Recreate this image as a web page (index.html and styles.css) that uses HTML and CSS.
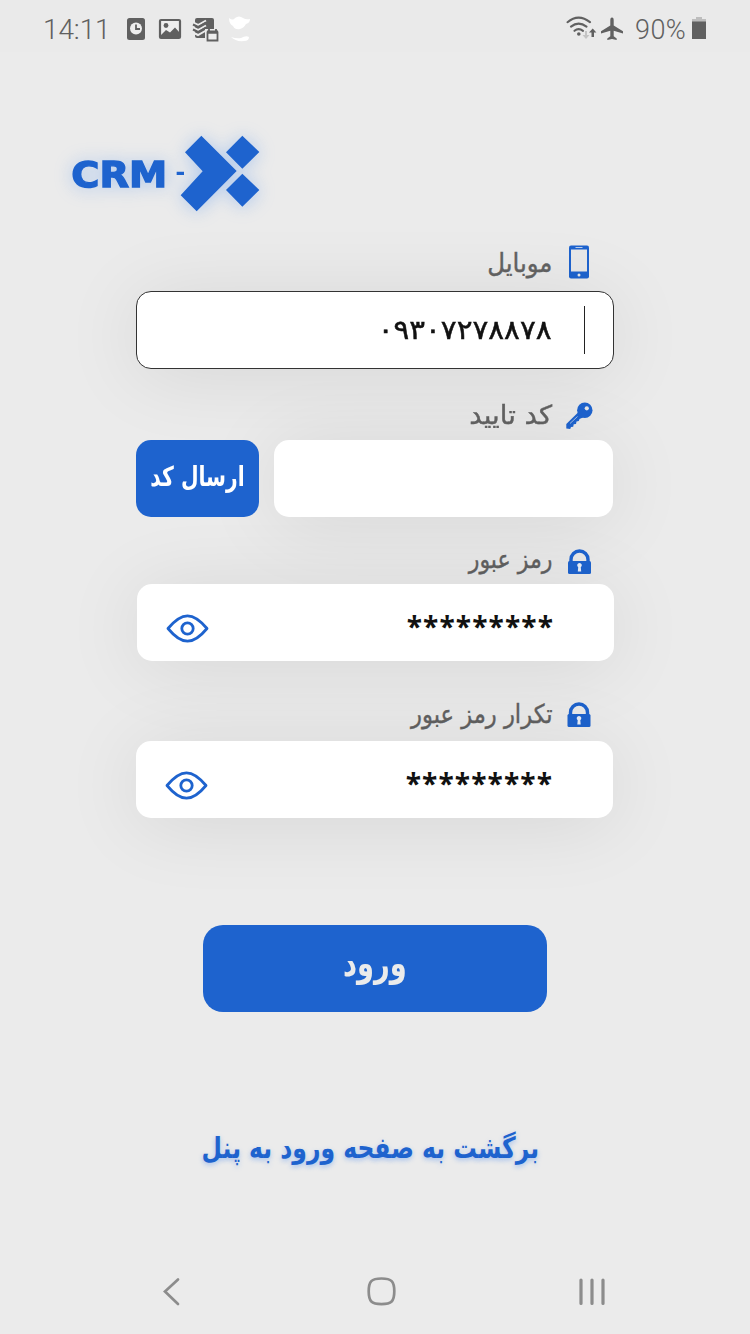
FILE: index.html
```html
<!DOCTYPE html>
<html lang="fa">
<head>
<meta charset="utf-8">
<title>CRM-X</title>
<link rel="stylesheet" href="styles.css">
</head>
<body>
<div class="screen">
  <header class="status">
    <span class="time">14:11</span>
    <svg class="status-left" viewBox="0 0 130 32" width="130" height="32">
      <rect x="1" y="4" width="18" height="22" rx="2.500" fill="#606060"/>
      <circle cx="10" cy="14.500" r="6" fill="#eee"/>
      <path d="M10 10.500v4.500h4" fill="none" stroke="#606060" stroke-width="1.800"/>
      <rect x="34" y="6" width="20" height="18" rx="1" fill="#eee" stroke="#606060" stroke-width="2.200"/>
      <circle cx="40" cy="11.500" r="2.400" fill="#606060"/>
      <path d="M35 21l5-5 4 2.500 5-5 5 5.500v5H35z" fill="#606060"/>
      <rect x="69" y="4" width="19" height="20" rx="2" fill="#606060"/>
      <path d="M67 8.500l5 2.500 8-4.500M67 13.500l5 2.500 8-4.500M67 18.500l5 2.500 8-4.500" fill="none" stroke="#ebebeb" stroke-width="2"/>
      <path d="M67 10.500l5 2.500 8-4.500M67 15.500l5 2.500 8-4.500" fill="none" stroke="#606060" stroke-width="2"/>
      <rect x="79" y="15" width="15" height="13" fill="#ebebeb"/>
      <path d="M81.500 18.500h10v8h-10zM83 18v-3M90 18v-3" fill="#eee" stroke="#606060" stroke-width="1.800"/>
      <path d="M81 18h11" stroke="#606060" stroke-width="3"/>
      <path d="M103 4q4 3 6 0 4-3 8 0 3 2 7 1 0 4-4 5-2 4-6 5-5 1-7-3-4-2-4-8zM105 23q6 2 10 1 5-3 8-1 0 4-5 4-8 1-13-4z" fill="#fff"/>
    </svg>
    <svg class="status-right" viewBox="0 0 60 32" width="60" height="32">
      <g fill="none" stroke="#606060" stroke-width="2.100" stroke-linecap="round">
        <path d="M2.500 8.200q11-9 22.500 0M6 12.600q7.500-6 15.500 0M9.500 16.800q4-3.500 8.500 0"/>
      </g>
      <circle cx="13.800" cy="20" r="1.800" fill="#606060"/>
      <path d="M20 17v4h-2.500l3.500 4 3.500-4H22v-4z" fill="#c4c4c4"/>
      <path d="M26.500 23v-4.500h-2.500l3.700-4 3.700 4H29v4.500z" fill="#606060"/>
      <path d="M47 3.500c1.300 0 1.700 1.400 1.700 2.700v5.200L58 17.200v2.300l-9.300-2.700v5.500l3 2.300v1.500L47 25l-4.700 1.100v-1.500l3-2.300v-5.500L36 19.500v-2.300l9.300-5.800V6.200c0-1.300.4-2.700 1.700-2.700z" fill="#606060"/>
    </svg>
    <span class="percent">90%</span>
    <svg class="battery" viewBox="0 0 16 24" width="16" height="24">
      <path d="M5 0h6v2h4v4H1V2h4z" fill="#bdbdbd"/><rect x="1" y="4.500" width="14" height="17.500" fill="#606060"/>
    </svg>
  </header>

  <svg class="logo" viewBox="0 0 690 330" width="230" height="110">
    <g fill="#1e63ce">
      <text class="logo-text" x="64" y="200" textLength="288" lengthAdjust="spacingAndGlyphs">CRM</text>
      <path d="M380 155h22v10h-22zM454 47l106 106-120 121-48-48 66-72-53-57zM577 47l51 49-51 50-49-49zM577 161l51 49-51 50-49-50z"/>
    </g>
  </svg>

  <main class="form" dir="rtl">
    <div class="label l1">
      <svg class="icon" viewBox="0 0 28 34" width="28" height="34">
        <rect x="4" y=".5" width="20" height="33" rx="2" fill="#1e63ce"/><path d="M6 4.500h16v22H6z" fill="#e8e8e8"/><path d="M10.500 2.500h7" stroke="#b9cdec"/><circle cx="14" cy="30" r="1.500" fill="#e8e8e8"/>
      </svg>
      <span class="t t1">موبایل</span>
    </div>
    <div class="field focus"><i class="caret"></i><span class="phone" dir="ltr">۰۹۳۰۷۲۷۸۸۷۸</span></div>

    <div class="label l2">
      <svg class="icon" viewBox="0 0 28 34" width="28" height="34">
        <path d="M13 14.500L1.300 26v4.500l3.900.5.800-2 2.200-.3.500-2.400 2.300-.4.500-2.400 2.300-.4.700-2.100 4.500-2z" fill="#1e63ce"/>
        <circle cx="19.800" cy="12.300" r="7.700" fill="#1e63ce"/><circle cx="21.800" cy="10.300" r="2.100" fill="#e6e6e6"/><path d="M5 25.500l7.500-7" stroke="#c3d2ea" stroke-width=".8"/>
      </svg>
      <span class="t t2">کد تایید</span>
    </div>
    <div class="row">
      <div class="field code"></div>
      <button class="send"><span class="t ts">ارسال کد</span></button>
    </div>

    <div class="label l3">
      <svg class="icon" viewBox="0 0 28 34" width="28" height="34">
        <path d="M6 18v-3.500a8 8 0 0 1 17 0V18" fill="none" stroke="#1e63ce" stroke-width="3.400"/><rect x="3" y="16" width="23" height="13" rx="1.500" fill="#1e63ce"/><path d="M14.500 18a2.300 2.300 0 0 1 1.300 4.200l.4 4.300h-3.400l.4-4.300A2.300 2.300 0 0 1 14.500 18z" fill="#e8eef8"/>
      </svg>
      <span class="t t3">رمز عبور</span>
    </div>
    <div class="field pw p1">
      <span class="stars">*********</span>
      <svg viewBox="0 0 44 32" width="44" height="32"><g fill="none" stroke="#1e63ce" stroke-width="2.800"><path d="M3 15.500C10 7 16 2.800 22.500 2.800S35 7 42 15.500C35 24 29 28.200 22.500 28.200S10 24 3 15.500z" stroke-linejoin="round"/><circle cx="22.500" cy="15.500" r="5.700"/></g></svg>
    </div>

    <div class="label l4">
      <svg class="icon" viewBox="0 0 28 34" width="28" height="34">
        <path d="M5.500 18v-3.500a8 8 0 0 1 17 0V18" fill="none" stroke="#1e63ce" stroke-width="3.400"/><rect x="2.500" y="16" width="23" height="13" rx="1.500" fill="#1e63ce"/><path d="M14 18a2.300 2.300 0 0 1 1.300 4.200l.4 4.300h-3.400l.4-4.300A2.300 2.300 0 0 1 14 18z" fill="#e8eef8"/>
      </svg>
      <span class="t t4">تکرار رمز عبور</span>
    </div>
    <div class="field pw">
      <span class="stars">*********</span>
      <svg viewBox="0 0 44 32" width="44" height="32"><g fill="none" stroke="#1e63ce" stroke-width="2.800"><path d="M3 15.500C10 7 16 2.800 22.500 2.800S35 7 42 15.500C35 24 29 28.200 22.500 28.200S10 24 3 15.500z" stroke-linejoin="round"/><circle cx="22.500" cy="15.500" r="5.700"/></g></svg>
    </div>
  </main>

  <button class="login"><span class="t tl">ورود</span></button>
  <a class="back" dir="rtl"><span class="t tb">برگشت به صفحه ورود به پنل</span></a>

  <nav class="nav">
    <svg viewBox="0 0 32 32" width="32" height="32"><path d="M22 4.500L9 16.500l13 12.500" fill="none" stroke="#8c8c8c" stroke-width="2.700" stroke-linecap="round"/></svg>
    <svg viewBox="0 0 32 32" width="32" height="32"><path d="M15.500 3.500c10 0 12.800 2.800 12.800 12.800s-2.800 12.800-12.800 12.800S2.700 26.300 2.700 16.300s2.800-12.800 12.800-12.800z" fill="none" stroke="#8c8c8c" stroke-width="2.700"/></svg>
    <svg viewBox="0 0 32 32" width="32" height="32"><path d="M5 5v23.500M16 5v23.500M27 5v23.500" stroke="#8c8c8c" stroke-width="3.200" stroke-linecap="round"/></svg>
  </nav>
</div>
</body>
</html>
```
FILE: styles.css
```css
* { box-sizing: border-box; }
body { margin: 0; background: #ebebeb; font-family: "DejaVu Sans", sans-serif; }
button { border: 0; padding: 0; font-family: inherit; }
svg { display: block; flex: none; }
.screen { width: 750px; height: 1334px; overflow: hidden; display: flex; flex-direction: column; background: #ebebeb; }

.status { height: 52px; flex: none; display: flex; align-items: flex-start; padding: 14px 39px 0 43px; color: #606060; font: 300 28px/32px Roboto, sans-serif; background: #eaeaea; }
.time { width: 83px; letter-spacing: -.1px; }
.status-left { margin-right: 309px; }
.status-right { margin-right: 10px; }
.percent { width: 56px; font-size: 27px; letter-spacing: .4px; white-space: nowrap; }
.battery { margin-top: 3px; }

.logo { margin: 68px 0 0 50px; overflow: visible; filter: drop-shadow(0 1px 9px rgba(80,145,240,.4)); }
.logo-text { font: bold 107px "DejaVu Sans", sans-serif; stroke: #1e63ce; stroke-width: 4px; }

.form { width: 478px; margin: 14px 0 0 136px; display: flex; flex-direction: column; }
.t { display: block; white-space: nowrap; }
.label { display: flex; align-items: flex-start; gap: 13px; padding-right: 21px; color: #606060; font-size: 26px; line-height: 34px; }
.label .t { transform-origin: right center; -webkit-text-stroke: .4px #606060; }
.l1 { height: 47px; padding-top: 1px; }
.l2 { height: 71px; padding-top: 29px; }
.l3 { height: 67px; padding-top: 28px; }
.l4 { height: 80px; padding-top: 37px; }
.t1 { transform: translateY(1px) scaleX(.94); }
.t2 { transform: scaleX(1.06); }
.t3 { transform: translateY(-3px) scaleX(.85); }
.t4 { transform: translateY(-1px) scaleX(.87); }

.field { height: 77px; flex: none; border-radius: 15px; background: #fff; box-shadow: 0 6px 80px rgba(0,0,0,.09); }
.focus { height: 78px; border: 1px solid #333; display: flex; align-items: center; padding-right: 28px; gap: 32px; }
.caret { width: 1px; height: 48px; background: #222; }
.phone { color: #111; font-size: 27px; line-height: 40px; transform: scaleX(1.09); transform-origin: right center; -webkit-text-stroke: .5px #111; }
.row { display: flex; gap: 15px; padding-right: 1px; }
.code { width: 339px; }
.send { position: relative; width: 123px; height: 77px; border-radius: 15px; background: #1e63ce; color: #fff; font-size: 26px; font-weight: bold; display: flex; justify-content: center; align-items: center; padding-bottom: 4px; }
.ts { transform: scale(.78, 1.05); }
.pw { display: flex; justify-content: space-between; align-items: center; width: 477px; padding: 12px 60px 0 28px; margin-right: 1px; position: relative; }
.p1 { margin-right: 0; }
.stars { color: #111; font: bold 28px/40px "Open Sans", sans-serif; letter-spacing: 1.1px; transform: translateY(-3px); }

.login { width: 344px; height: 87px; flex: none; margin: 107px 0 0 203px; border-radius: 20px; background: #1e63ce; color: #ebebeb; font-size: 36px; font-weight: bold; display: flex; justify-content: center; align-items: center; padding-bottom: 10px; }
.tl { transform: scaleX(.76); }
.back { display: flex; width: 342px; height: 50px; margin: 112px 0 0 199px; align-items: center; justify-content: center; color: #1e63ce; font-size: 28px; font-weight: bold; text-shadow: 0 1px 6px rgba(60,130,240,.4); }
.tb { transform: translateY(-1px) scale(.838, 1.05); }
.nav { display: flex; justify-content: space-between; margin: auto 142px 27px 156px; }
```
